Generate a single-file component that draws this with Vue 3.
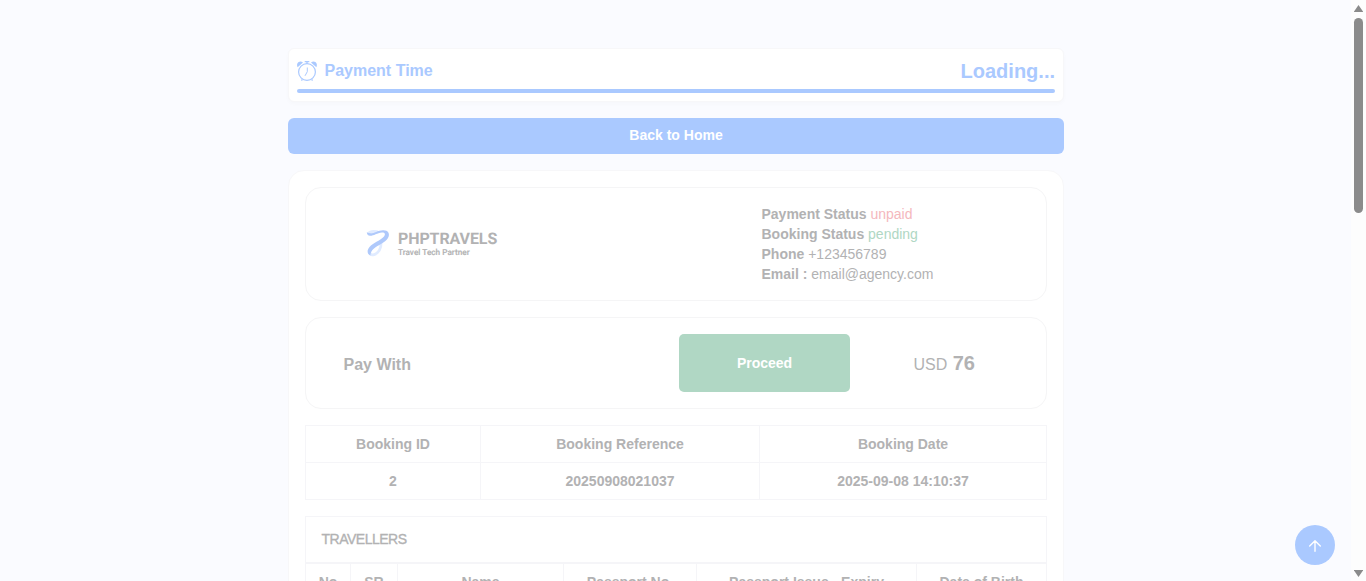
<script setup>
const contact = [
  { label: 'Payment Status', value: 'unpaid', tone: 'danger' },
  { label: 'Booking Status', value: 'pending', tone: 'success' },
  { label: 'Phone', value: '+123456789', tone: '' },
  { label: 'Email :', value: 'email@agency.com', tone: '' },
]
const bookingHead = ['Booking ID', 'Booking Reference', 'Booking Date']
const bookingRow = ['2', '20250908021037', '2025-09-08 14:10:37']
const travellerHead = ['No', 'SR', 'Name', 'Passport No.', 'Passport Issue - Expiry', 'Date of Birth']
</script>

<template>
  <div class="screen">
    <main class="page">
      <div class="container">
        <section class="timer">
          <div class="timer-row">
            <svg class="clock" viewBox="0 0 20 20" fill="none" stroke="currentColor">
              <circle cx="10" cy="11" r="8.400" stroke-width="1.200" />
              <path d="M10.300 6.500v4.200L8 14.800" stroke-width="1" />
              <path d="M7.700.700h4.600M10 .7v2M5.300 18.300l-.8 1.300M14.700 18.300l.8 1.300" stroke-width="1.300" />
              <path d="M.6 6.200C-1.200 2.500 2.300-1.200 6 1.600ZM19.400 6.200C21.200 2.500 17.700-1.200 14 1.600Z" fill="currentColor" stroke="none" />
            </svg>
            <strong class="timer-label">Payment Time</strong>
            <strong class="timer-value">Loading...</strong>
          </div>
          <div class="progress"></div>
        </section>

        <button class="home">Back to Home</button>

        <section class="invoice">
          <div class="panel agency">
            <div class="brand">
              <svg class="mark" viewBox="0 0 24 28" fill="none">
                <path d="M2.500 3.500C5 0 9 1.500 12 2M15 10.500C15.500 16.500 14 22.500 8 24.700C4.500 25.500 3 23.500 4 21" stroke="#e0ebff" stroke-width="2.800" />
                <path d="M.8 2.200C6 5.500 10 .5 17 .2C22 0 24.500 3.500 22 8C19 13 12 15 8 18.500C5.500 20.500 4.500 23 4.300 25.500C1 24 .8 20 3.500 17C7 13 14 10.500 17.500 7C20 4.500 19 2.200 16 2.500C11 3 7.500 6 4 5.800C2 5.700 .8 4 .8 2.200Z" fill="#afc9fb" />
              </svg>
              <div class="brand-text">
                <div class="brand-name">PHPTRAVELS</div>
                <div class="brand-tag">Travel Tech Partner</div>
              </div>
            </div>
            <div class="contact">
              <div v-for="c in contact" :key="c.label"><strong>{{ c.label }}</strong> <span :class="c.tone">{{ c.value }}</span></div>
            </div>
          </div>

          <div class="panel pay">
            <strong class="pay-label">Pay With</strong>
            <button class="proceed">Proceed</button>
            <div class="amount">USD <strong>76</strong></div>
          </div>

          <div class="booking">
            <div v-for="h in bookingHead" :key="h" class="cell">{{ h }}</div>
            <div v-for="v in bookingRow" :key="v" class="cell">{{ v }}</div>
          </div>

          <div class="travellers">
            <div class="travellers-title">TRAVELLERS</div>
            <div class="travellers-head">
              <div v-for="h in travellerHead" :key="h" class="cell">{{ h }}</div>
            </div>
          </div>
        </section>
      </div>
      <button class="to-top" aria-label="Back to top">
        <svg viewBox="0 0 16 16" fill="none" stroke="#fff" stroke-width="1.400" stroke-linecap="round" stroke-linejoin="round"><path d="M8 14.300V3.700M2.700 9 8 3.700 13.300 9" /></svg>
      </button>
    </main>
    <div class="scrollbar">
      <svg viewBox="0 0 9 8"><path d="M4.500 0 9 6.500V7H0v-.5Z" fill="#8b8b8b" /></svg>
      <div class="thumb"></div>
      <svg class="down" viewBox="0 0 9 8"><path d="M4.500 7 9 .5V0H0v.5Z" fill="#8b8b8b" /></svg>
    </div>
  </div>
</template>

<style>
body { margin: 0; overflow: hidden; }
</style>

<style scoped>
* { box-sizing: border-box; }
.screen {
  display: flex;
  width: 1366px;
  height: 581px;
  overflow: hidden;
  font-family: "Liberation Sans", Arial, sans-serif;
  font-size: 14px;
  line-height: 20px;
  color: #b2b2b3;
}
button { border: 0; padding: 0; font: inherit; font-weight: 700; color: #fff; }
.page { position: relative; flex: 1; background: #fafbff; overflow: hidden; }
.container { width: 776px; margin-left: 288px; padding-top: 48px; display: flex; flex-direction: column; }
.timer {
  height: 54px;
  padding: 8px;
  background: #fff;
  border: 1px solid #f7f7f9;
  border-radius: 6px;
  box-shadow: 0 2px 4px rgba(0, 0, 0, 0.02);
  color: #aac9ff;
}
.timer-row { display: flex; align-items: center; height: 28px; }
.clock { width: 20px; height: 20px; overflow: visible; }
.timer-label { margin-left: 7.5px; font-size: 16px; }
.timer-value { margin-left: auto; font-size: 20px; }
.progress { height: 4px; margin-top: 4px; border-radius: 2px; background: #aac9ff; }
.home { height: 36px; margin-top: 16px; padding-bottom: 2px; border-radius: 6px; background: #aac9ff; }
.invoice {
  height: 700px;
  margin-top: 16px;
  padding: 16px;
  background: #fff;
  border: 1px solid #f7f7f9;
  border-radius: 16px;
}
.panel { border: 1px solid #f5f5f6; border-radius: 16px; display: flex; align-items: center; }
.agency { height: 114px; }
.brand { display: flex; width: 455.5px; padding-left: 60px; }
.mark { width: 24px; height: 28px; overflow: visible; }
.brand-text { margin-left: 8px; font-family: Roboto, sans-serif; text-rendering: geometricPrecision; }
.brand-name { font-size: 16px; line-height: 18px; font-weight: 700; letter-spacing: -0.1px; }
.brand-tag { font-size: 8.2px; line-height: 11px; font-weight: 500; letter-spacing: 0.02px; -webkit-text-stroke: 0.15px #b2b2b3; }
.danger { color: #f4b8bd; }
.success { color: #b0d7c4; }
.pay { height: 92px; margin-top: 16px; }
.pay-label { width: 373px; padding: 3px 0 0 37.5px; font-size: 16px; }
.proceed { width: 171px; height: 58px; border-radius: 5px; background: #b0d7c4; }
.amount { margin-left: 63.5px; padding-top: 2px; font-size: 16px; }
.amount strong { margin-left: 1px; font-size: 20px; }
.booking {
  display: grid;
  grid-template-columns: 175px 279px 287px;
  grid-template-rows: 37px 37px;
  margin-top: 16px;
  border: solid #f5f5f8;
  border-width: 1px 0 0 1px;
}
.cell {
  display: flex;
  align-items: center;
  justify-content: center;
  font-weight: 700;
  white-space: nowrap;
  border: solid #f5f5f8;
  border-width: 0 1px 1px 0;
}
.travellers { margin-top: 16px; border: solid #f5f5f8; border-width: 1px 0 0 1px; }
.travellers-title {
  height: 47px;
  padding: 12px 15.5px;
  border: solid #f5f5f8;
  border-width: 0 1px 2px 0;
  letter-spacing: -0.5px;
  -webkit-text-stroke: 0.35px #b2b2b3;
}
.travellers-head { display: grid; grid-template-columns: 45px 47px 166px 133px 220px 130px; grid-template-rows: 37px; }
.to-top {
  position: absolute;
  left: 1295px;
  top: 525px;
  width: 40px;
  height: 40px;
  border-radius: 50%;
  background: #aac9ff;
  display: flex;
  align-items: center;
  justify-content: center;
}
.to-top svg { width: 16px; height: 16px; }
.scrollbar { width: 15px; padding: 5px 3px 3px; background: #fdfdfd; display: flex; flex-direction: column; align-items: flex-start; }
.scrollbar svg { width: 9px; height: 8px; }
.thumb { width: 9px; height: 195px; margin-top: 5px; border-radius: 5px; background: #8b8b8b; }
.scrollbar .down { margin-top: auto; }
</style>
